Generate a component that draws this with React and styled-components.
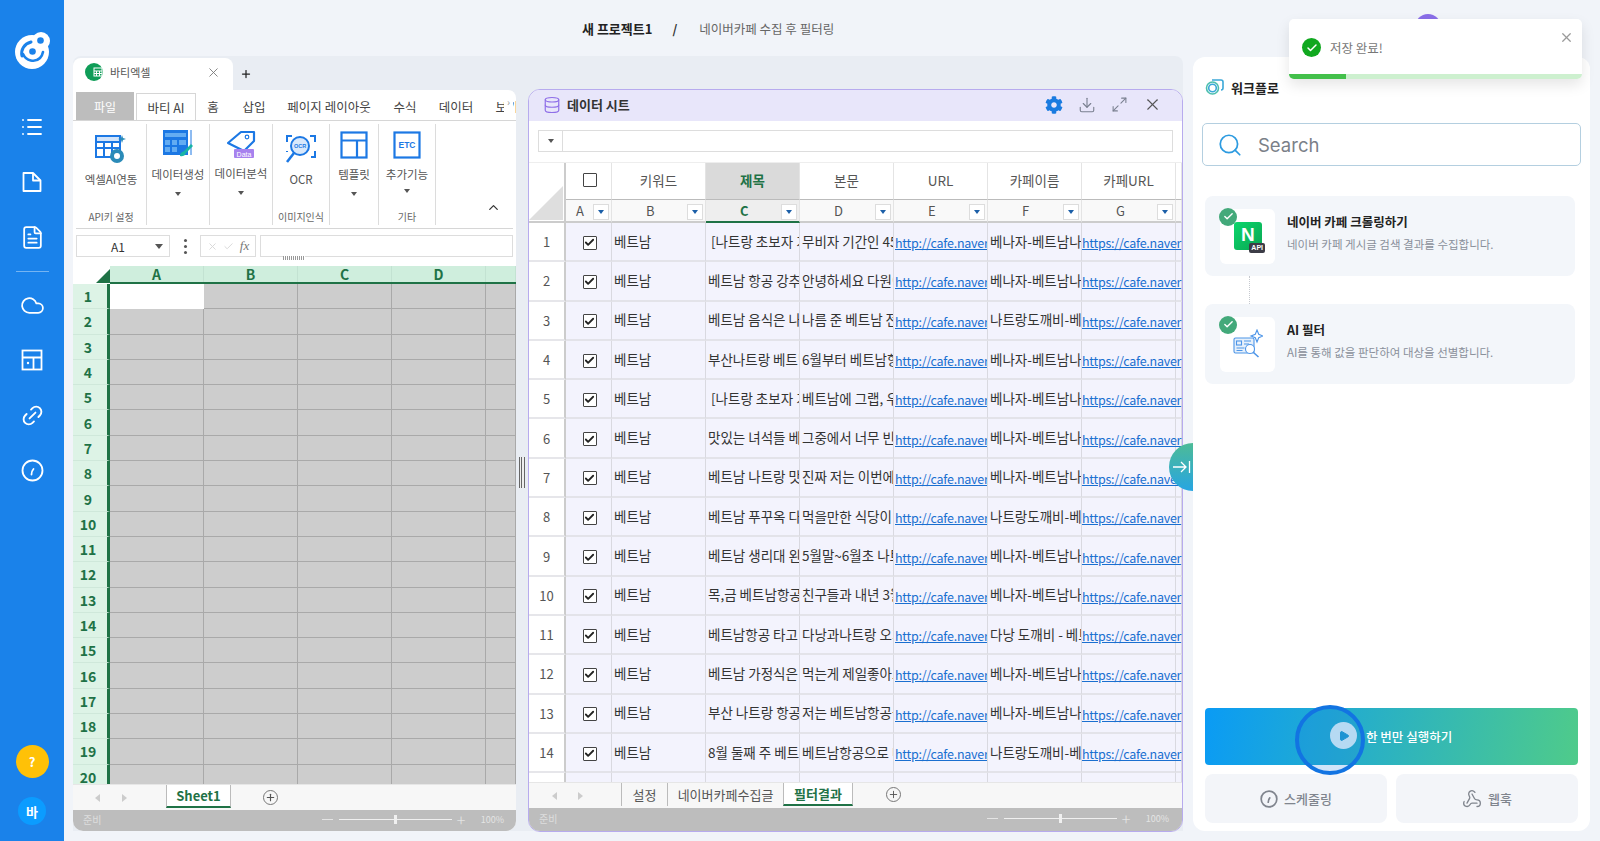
import React from 'react';
import styled, { createGlobalStyle } from 'styled-components';
import { Download, Maximize2, X, Check, Cloud, Link2, Search as SearchIcon, List, FileText, Play, Webhook, ChevronUp, Plus, Database } from 'lucide-react';
import { FaCog } from 'react-icons/fa';

const FONT = `"Noto Sans CJK KR", "Noto Sans", "Liberation Sans", sans-serif`;
const GREEN = '#1f7246';

const GlobalStyle = createGlobalStyle`
  html, body { margin: 0; padding: 0; height: 100%; overflow: hidden; }
  body { font-family: ${FONT}; background: #f1f4f9; color: #333; }
  * { box-sizing: border-box; }
`;

const Page = styled.div`
  position: relative;
  display: flex;
  width: 1600px;
  height: 841px;
  overflow: hidden;
`;

const Sidebar = styled.nav`
  width: 64px;
  flex: none;
  background: #1a82ea;
  display: flex;
  flex-direction: column;
  align-items: center;
  color: #fff;
  padding-top: 32px;
`;
const SideIcons = styled.div`
  display: flex;
  flex-direction: column;
  align-items: center;
  gap: 31px;
  margin-top: 46px;
`;
const SideSlot = styled.div`
  height: 24px;
  display: flex;
  align-items: center;
  justify-content: center;
`;
const SideRule = styled.div`
  width: 33px;
  height: 1px;
  background: rgba(255, 255, 255, 0.4);
  margin: -9px 0 -10px;
`;
const HelpDot = styled.div`
  margin-top: auto;
  width: 33px;
  height: 33px;
  border-radius: 50%;
  background: #ffc107;
  font-size: 13px;
  font-weight: 700;
  display: flex;
  align-items: center;
  justify-content: center;
`;
const UserDot = styled.div`
  width: 28px;
  height: 28px;
  margin: 19px 0 16px;
  border-radius: 50%;
  background: #0b9cff;
  font-size: 13px;
  font-weight: 700;
  display: flex;
  align-items: center;
  justify-content: center;
`;

const Main = styled.div`
  flex: 1;
  display: flex;
  flex-direction: column;
  min-width: 0;
`;
const TopBar = styled.header`
  height: 56px;
  flex: none;
  display: flex;
  align-items: center;
  padding-left: 518px;
  font-size: 12.5px;
`;
const ProjectName = styled.strong`
  font-size: 13px;
  font-weight: 700;
  color: #222;
`;
const Slash = styled.span`
  margin: 0 22px 0 20px;
  font-weight: 700;
  color: #333;
`;
const PageName = styled.span`
  color: #666;
`;
const Body = styled.div`
  flex: 1;
  display: flex;
  padding: 0 10px 10px 9px;
  min-height: 0;
`;
const Workspace = styled.div`
  width: 1110px;
  flex: none;
  background: #e9edf3;
  border-radius: 8px 8px 0 0;
  display: flex;
  height: 775px;
`;
const LeftCol = styled.div`
  width: 443px;
  flex: none;
  display: flex;
  flex-direction: column;
`;
const WindowTabs = styled.div`
  height: 34px;
  flex: none;
  padding-top: 2px;
  display: flex;
  align-items: center;
`;
const WindowTab = styled.div`
  width: 160px;
  height: 32px;
  background: #fff;
  border-radius: 8px 8px 0 0;
  display: flex;
  align-items: center;
  padding: 0 12px 4px;
  font-size: 11px;
  color: #555;
  gap: 7px;
  svg:last-child { margin-left: auto; color: #777; }
`;
const GreenBadge = styled.span`
  width: 18px;
  height: 18px;
  border-radius: 50%;
  background: #0f9d58;
  display: flex;
  align-items: center;
  justify-content: center;
`;
const ExcelPanel = styled.section`
  flex: 1;
  background: #fff;
  border-radius: 0 8px 10px 10px;
  overflow: hidden;
  display: flex;
  flex-direction: column;
`;
const RibbonTabs = styled.div`
  height: 31px;
  flex: none;
  display: flex;
  align-items: flex-end;
  padding: 0 3px;
  border-bottom: 1px solid #d6d6d6;
  font-size: 12.5px;
  color: #444;
  overflow: hidden;
  position: relative;
`;
const FileTab = styled.div`
  width: 58px;
  flex: none;
  height: 28px;
  background: #bdbdbd;
  color: #fff;
  font-size: 12px;
  display: flex;
  align-items: center;
  justify-content: center;
  margin-right: 2px;
`;
const RibbonTab = styled.div`
  height: 27px;
  flex: none;
  width: ${(p) => p.$w}px;
  display: flex;
  align-items: center;
  justify-content: center;
  white-space: nowrap;
  ${(p) => p.$active && `
    background: #fff;
    border: 1px solid #d6d6d6;
    border-bottom: 1px solid #fff;
    margin-bottom: -1px;
    height: 28px;
  `}
`;
const TabScroll = styled.span`
  position: absolute;
  right: 3px;
  top: 1px;
  bottom: 1px;
  width: 9px;
  background: #fff;
  color: #999;
  font-size: 10px;
  line-height: 22px;
  text-align: center;
`;
const Ribbon = styled.div`
  height: 108px;
  flex: none;
  display: flex;
  margin: 0 3px;
  padding: 3px 0;
  border-bottom: 1px solid #d6d6d6;
`;
const RibbonGroup = styled.div`
  width: ${(p) => p.$w}px;
  flex: ${(p) => (p.$grow ? 1 : 'none')};
  border-right: ${(p) => (p.$grow ? 'none' : '1px solid #dcdcdc')};
  display: flex;
  flex-direction: column;
  align-items: center;
  position: relative;
`;
const RibbonBtn = styled.div`
  height: 85px;
  display: flex;
  flex-direction: column;
  align-items: center;
  font-size: 11.5px;
  color: #555;
  white-space: nowrap;
  padding-top: ${(p) => p.$top}px;
`;
const RibbonLabel = styled.div`
  margin-top: ${(p) => p.$gap}px;
`;
const RibbonArrow = styled.div`
  width: 0;
  height: 0;
  margin-top: ${(p) => p.$mt || 10}px;
  border: 3.5px solid transparent;
  border-top: 4px solid #555;
  border-bottom: 0;
`;
const GroupCaption = styled.div`
  font-size: 10px;
  color: #666;
  height: 16px;
  line-height: 16px;
`;
const Collapse = styled.div`
  margin: auto 12px 10px auto;
  color: #333;
  display: flex;
`;
const FormulaRow = styled.div`
  height: 30px;
  flex: none;
  display: flex;
  align-items: center;
  padding: 4px 3px 0;
  position: relative;
`;
const NameBox = styled.div`
  width: 94px;
  height: 22px;
  border: 1px solid #ddd;
  font-size: 12px;
  display: flex;
  align-items: center;
  justify-content: center;
  position: relative;
  padding-right: 10px;
  color: #333;
`;
const DownTri = styled.i`
  width: 0;
  height: 0;
  border: ${(p) => p.$s || 4}px solid transparent;
  border-top: ${(p) => (p.$s || 4) + 1}px solid ${(p) => p.$c || '#555'};
  border-bottom: 0;
  display: block;
`;
const NameArrow = styled(DownTri)`
  position: absolute;
  right: 6px;
  top: 8px;
`;
const Kebab = styled.div`
  width: 30px;
  display: flex;
  flex-direction: column;
  align-items: center;
  gap: 3px;
  i { width: 3px; height: 3px; background: #555; border-radius: 50%; }
`;
const FxBox = styled.div`
  width: 56px;
  height: 22px;
  border: 1px solid #ddd;
  display: flex;
  align-items: center;
  justify-content: space-around;
  padding: 0 3px;
  color: #d6d6d6;
  font: italic 13px "Liberation Serif", serif;
  em { color: #777; font-size: 13px; }
`;
const FormulaInput = styled.div`
  flex: 1;
  height: 22px;
  margin-left: 4px;
  border: 1px solid #ddd;
`;
const GripDots = styled.div`
  position: absolute;
  left: 210px;
  bottom: -1px;
  width: 22px;
  height: 4px;
  background: repeating-linear-gradient(90deg, #999 0 1px, #fff 1px 2px);
`;
const ColHeads = styled.div`
  height: 23px;
  flex: none;
  margin-top: 2px;
  padding-top: 5px;
  display: grid;
  grid-template-columns: 37px repeat(4, 94px) 1fr;
  grid-template-rows: 16px;
  border-bottom: 2px solid ${GREEN};
`;
const Corner = styled.div`
  margin: -5px 0 -2px;
  display: flex;
  justify-content: flex-end;
  align-items: flex-end;
  background: #fff;
  position: relative;
  i {
    width: 14px;
    height: 14px;
    margin: 0 0 1px;
    background: ${GREEN};
    clip-path: polygon(100% 0, 100% 100%, 0 100%);
  }
`;
const ColHead = styled.div`
  font-size: 14px;
  line-height: 16px;
  font-weight: 700;
  color: ${GREEN};
  background: #cfeedd;
  display: flex;
  align-items: center;
  justify-content: center;
  border-right: 1px solid #c3e2d2;
`;
const SheetArea = styled.div`
  flex: 1;
  min-height: 0;
  overflow: hidden;
  display: grid;
  grid-template-columns: 37px repeat(4, 94px) 1fr;
  grid-auto-rows: 25.3px;
`;
const RowHead = styled.div`
  background: #ddf3e6;
  border-right: 3px solid ${GREEN};
  border-bottom: 1px solid #cfe8da;
  font-size: 14px;
  font-weight: 700;
  color: ${GREEN};
  display: flex;
  align-items: center;
  justify-content: center;
  padding-right: 4px;
`;
const Cell = styled.div`
  background: ${(p) => (p.$on ? '#fff' : '#cdcdcd')};
  border-right: 1px solid #a9a9a9;
  border-bottom: 1px solid #a9a9a9;
  ${(p) => p.$on && 'border-color: #fff;'}
`;
const SheetTabs = styled.div`
  height: 26px;
  flex: none;
  background: #f7f7f7;
  display: flex;
  align-items: flex-start;
  font-size: 13px;
  position: relative;
  border-top: 1px solid #e6e6e6;
`;
const NavTri = styled.i`
  width: 0;
  height: 0;
  border: 4px solid transparent;
  ${(p) => (p.$left ? 'border-right: 5px solid #ccc; border-left: 0;' : 'border-left: 5px solid #ccc; border-right: 0;')}
  margin-top: 9px;
  margin-left: ${(p) => p.$ml}px;
`;
const SheetTab = styled.div`
  height: 23px;
  width: ${(p) => p.$w}px;
  margin-left: ${(p) => p.$ml || 0}px;
  display: flex;
  align-items: center;
  justify-content: center;
  white-space: nowrap;
  background: ${(p) => (p.$active ? '#fff' : 'transparent')};
  color: ${(p) => (p.$active ? GREEN : '#555')};
  font-weight: ${(p) => (p.$active ? 700 : 400)};
  border-bottom: ${(p) => (p.$active ? `2px solid ${GREEN}` : 'none')};
  border-left: ${(p) => (p.$sep || p.$active ? '1px solid #bbb' : 'none')};
  border-right: ${(p) => (p.$active ? '1px solid #bbb' : 'none')};
`;
const AddSheet = styled.div`
  width: 15px;
  height: 15px;
  margin: ${(p) => p.$mt || 5}px 0 0 ${(p) => p.$ml}px;
  border: 1.5px solid #777;
  border-radius: 50%;
  color: #555;
  display: flex;
  align-items: center;
  justify-content: center;
`;
const StatusBar = styled.div`
  height: ${(p) => p.$h}px;
  flex: none;
  background: #bdbdbd;
  color: #ddd;
  font-size: 10px;
  display: flex;
  align-items: center;
  padding: 0 ${(p) => p.$pr}px 3px 10px;
`;
const ZoomGroup = styled.div`
  margin-left: auto;
  display: flex;
  align-items: center;
  color: #e4e4e4;
  gap: 5px;
`;
const Minus = styled.i`
  width: 11px;
  height: 1px;
  background: #e4e4e4;
  margin-right: 1px;
`;
const Slider = styled.div`
  width: 113px;
  height: 1px;
  background: #f0f0f0;
  position: relative;
  i {
    position: absolute;
    left: 55px;
    top: -4px;
    width: 3px;
    height: 9px;
    background: #f0f0f0;
  }
`;
const PlusMark = styled.span`
  font-size: 16px;
  line-height: 1;
  width: 12px;
  font-weight: 300;
`;
const ZoomPct = styled.span`
  margin-left: 7px;
  font-size: 9px;
`;
const Splitter = styled.div`
  width: 12px;
  flex: none;
  display: flex;
  align-items: center;
  justify-content: center;
  padding-top: 2px;
  i {
    width: 6px;
    height: 31px;
    margin-top: 56px;
    border-left: 1px solid #666;
    border-right: 1px solid #666;
    background: linear-gradient(90deg, #eee 0 1.5px, #666 1.5px 2.5px, #eee 2.5px);
  }
`;
const DataCol = styled.section`
  flex: 1;
  display: flex;
  flex-direction: column;
  min-width: 0;
  margin-top: 33px;
  height: 743px;
  border: 1px solid #b7abee;
  border-radius: 12px;
  overflow: hidden;
  background: #fff;
`;
const DataHead = styled.div`
  height: 31px;
  flex: none;
  background: #e8e6fa;
  display: flex;
  align-items: center;
  padding: 0 20px 2px 14px;
  font-size: 13px;
  font-weight: 700;
  color: #333;
  gap: 6px;
`;
const DataActions = styled.div`
  margin-left: auto;
  display: flex;
  align-items: center;
  gap: 15px;
  color: #7a8090;
`;
const DataFormula = styled.div`
  height: 41px;
  flex: none;
  padding: 9px 9px 0;
  display: flex;
`;
const DropCell = styled.div`
  width: 24px;
  height: 22px;
  border: 1px solid #ddd;
  border-right: 0;
  display: flex;
  align-items: center;
  justify-content: center;
`;
const WideInput = styled.div`
  flex: 1;
  height: 22px;
  border: 1px solid #ddd;
`;
const COLS = '37px 46px repeat(6, 94px) 1fr';
const HeadGrid = styled.div`
  display: grid;
  grid-template-columns: ${COLS};
  grid-template-rows: 37px 23px;
  flex: none;
  border-top: 1px solid #eee;
`;
const GridCorner = styled.div`
  grid-row: 1 / 3;
  display: flex;
  align-items: flex-end;
  justify-content: flex-end;
  border-right: 2px solid #ccc;
  border-bottom: 2px solid #ccc;
  i {
    width: 34px;
    height: 34px;
    margin: 0 1px 1px 0;
    background: #dedede;
    clip-path: polygon(100% 0, 100% 100%, 0 100%);
  }
`;
const FieldHead = styled.div`
  display: flex;
  align-items: center;
  justify-content: center;
  padding-bottom: 2px;
  font-size: 13.5px;
  color: ${(p) => (p.$sel ? GREEN : '#555')};
  font-weight: ${(p) => (p.$sel ? 700 : 400)};
  background: ${(p) => (p.$sel ? '#dadada' : '#fff')};
  border-right: 1px solid #e4e4e4;
  border-bottom: 1px solid #bbb;
`;
const BoxOutline = styled.span`
  width: 14px;
  height: 14px;
  margin-left: 2px;
  border: 1.5px solid #444;
  border-radius: 1px;
  display: flex;
  align-items: center;
  justify-content: center;
  background: #fff;
`;
const LetterHead = styled.div`
  position: relative;
  display: flex;
  align-items: center;
  font-size: 13px;
  color: ${(p) => (p.$sel ? GREEN : '#555')};
  font-weight: ${(p) => (p.$sel ? 700 : 400)};
  background: ${(p) => (p.$sel ? '#eeeeee' : '#f9f9f9')};
  border-right: 1px solid #e4e4e4;
  border-bottom: ${(p) => (p.$sel ? `2px solid ${GREEN}` : '2px solid #ccc')};
  padding-left: ${(p) => p.$pl}px;
`;
const FilterBtn = styled.span`
  position: absolute;
  right: 2px;
  top: 4px;
  width: 16px;
  height: 16px;
  background: #fff;
  border: 1px solid #ddd;
  display: flex;
  align-items: center;
  justify-content: center;
`;
const RowsArea = styled.div`
  flex: 1;
  min-height: 0;
  overflow: hidden;
  display: grid;
  grid-template-columns: ${COLS};
  grid-auto-rows: 39.3px;
`;
const RowNo = styled.div`
  background: #fff;
  border-right: 2px solid #ccc;
  border-bottom: 2px solid #e6e6ea;
  font-size: 13px;
  color: #555;
  display: flex;
  align-items: center;
  justify-content: center;
`;
const DataCell = styled.div`
  background: #f3f3fd;
  border-right: 1px solid #d9d9e0;
  border-bottom: 2px solid #e3e3e9;
  font-size: 13.5px;
  line-height: 18px;
  color: #333;
  display: flex;
  align-items: center;
  justify-content: ${(p) => (p.$center ? 'center' : 'flex-start')};
  padding: ${(p) => (p.$center ? '2px 0 0' : '0 0 2px 2px')};
  overflow: hidden;
  white-space: pre;
`;
const LinkCell = styled(DataCell)`
  padding: 3px 0 0 ${(p) => (p.$spill ? 0 : 1)}px;
  color: #1a6fd0;
  font-size: 12.5px;
  letter-spacing: -0.25px;
  ${(p) => p.$spill && 'overflow: visible; position: relative; z-index: 1;'}
  a {
    color: inherit;
    text-decoration: underline;
  }
`;
const Right = styled.aside`
  flex: 1;
  background: #fff;
  border-radius: 12px;
  margin: 1px 0 0 10px;
  height: 774px;
  display: flex;
  flex-direction: column;
  padding: 0 9px;
`;
const FlowTitle = styled.div`
  height: 66px;
  flex: none;
  display: flex;
  align-items: center;
  gap: 6px;
  padding: 0 0 6px 3px;
  font-size: 13px;
  font-weight: 700;
  color: #222;
`;
const SearchBox = styled.div`
  height: 43px;
  flex: none;
  border: 1px solid #b4cfe0;
  border-radius: 5px;
  display: flex;
  align-items: center;
  padding-left: 14px;
  gap: 15px;
  font: 400 18.5px Inter, "Noto Sans", sans-serif;
  color: #7a8088;
`;
const FlowList = styled.div`
  margin: 30px 6px 0 3px;
  display: flex;
  flex-direction: column;
  flex: 1;
`;
const FlowCard = styled.div`
  height: 80px;
  flex: none;
  background: #f3f6fa;
  border-radius: 8px;
  display: flex;
  align-items: center;
  padding-left: 15px;
  gap: 12px;
`;
const Dots = styled.div`
  height: 28px;
  flex: none;
  margin-left: 44px;
  border-left: 1px dotted #c6c9cf;
`;
const IconBox = styled.div`
  position: relative;
  width: 55px;
  height: 55px;
  background: #fff;
  border-radius: 6px;
  display: flex;
  align-items: center;
  justify-content: center;
`;
const DoneBadge = styled.span`
  position: absolute;
  left: -1px;
  top: -1px;
  width: 18px;
  height: 18px;
  border-radius: 50%;
  background: #43a97a;
  color: #fff;
  display: flex;
  align-items: center;
  justify-content: center;
`;
const NaverMark = styled.div`
  position: relative;
  width: 28px;
  height: 28px;
  margin: 0 0 1px 1px;
  border-radius: 3px;
  background: linear-gradient(135deg, #0bd66b, #0aa653);
  color: #fff;
  font: 800 19px "Liberation Sans", sans-serif;
  line-height: 25px;
  padding-left: 7px;
`;
const ApiTag = styled.span`
  position: absolute;
  right: -3px;
  bottom: -3px;
  background: #3c3c46;
  color: #fff;
  border-radius: 2px;
  font: 700 7px/10px "Liberation Sans", sans-serif;
  padding: 0 2px;
`;
const CardText = styled.div`
  display: flex;
  flex-direction: column;
  gap: 5px;
  padding-bottom: 8px;
`;
const CardTitle = styled.div`
  font-size: 12.5px;
  font-weight: 700;
  color: #222;
  line-height: 18px;
`;
const CardDesc = styled.div`
  font-size: 11.5px;
  color: #8a909a;
  line-height: 16px;
`;
const RunBtn = styled.div`
  height: 57px;
  flex: none;
  margin: 0 3px;
  border-radius: 4px;
  background: linear-gradient(100deg, #0a9bf5, #4fcb8a);
  color: #fff;
  font-size: 12.5px;
  font-weight: 500;
  display: flex;
  align-items: center;
  padding-left: 125px;
  gap: 9px;
`;
const PlayDot = styled.span`
  width: 27px;
  height: 27px;
  border-radius: 50%;
  background: rgba(255, 255, 255, 0.85);
  color: #1f9bd0;
  display: flex;
  align-items: center;
  justify-content: center;
  margin-top: -2px;
`;
const SubRow = styled.div`
  margin: 9px 3px 8px;
  display: grid;
  grid-template-columns: 1fr 1fr;
  gap: 9px;
  flex: none;
`;
const SubBtn = styled.div`
  height: 49px;
  background: #f3f5f9;
  border-radius: 8px;
  display: flex;
  align-items: center;
  justify-content: center;
  gap: 6px;
  font-size: 13px;
  font-weight: 500;
  color: #80858e;
`;
const Toast = styled.div`
  position: absolute;
  left: 1289px;
  top: 19px;
  width: 293px;
  height: 60px;
  background: #fff;
  border-radius: 5px;
  box-shadow: 0 6px 14px rgba(0, 0, 0, 0.1);
  overflow: hidden;
  display: flex;
  align-items: center;
  padding: 0 0 3px 13px;
  gap: 9px;
  font-size: 12.5px;
  color: #777;
`;
const ToastCheck = styled.span`
  width: 19px;
  height: 19px;
  border-radius: 50%;
  background: #10a81f;
  color: #fff;
  display: flex;
  align-items: center;
  justify-content: center;
`;
const ToastClose = styled.span`
  position: absolute;
  right: 8px;
  top: 11px;
  color: #9a9a9a;
  display: flex;
`;
const ToastTrack = styled.div`
  position: absolute;
  left: 0;
  right: 0;
  bottom: 0;
  height: 5px;
  background: #cdf0cf;
  i {
    display: block;
    width: 57px;
    height: 100%;
    background: #43c04b;
  }
`;
const Avatar = styled.div`
  position: absolute;
  left: 1415px;
  top: 14px;
  width: 26px;
  height: 26px;
  border-radius: 50%;
  background: #8a6ee8;
`;
const Cursor = styled.div`
  position: absolute;
  left: 1295px;
  top: 705px;
  width: 70px;
  height: 70px;
  border: 4px solid #1274e2;
  border-radius: 50%;
  background: rgba(25, 120, 225, 0.2);
`;
const DockTab = styled.div`
  position: absolute;
  z-index: 2;
  left: 1169px;
  top: 443px;
  width: 24px;
  height: 48px;
  border-radius: 24px 0 0 24px;
  background: linear-gradient(#4dbb97, #27a5e2);
  color: #fff;
  display: flex;
  align-items: center;
  padding-left: 3px;
`;

const fileIcon = (
  <svg width="22" height="22" viewBox="0 0 22 22" fill="none" stroke="#fff" strokeWidth="1.8" strokeLinejoin="round">
    <path d="M2.5 2h9.5l7.5 7.5V20h-17z" />
    <path d="M12 2v7.5h7.5" />
  </svg>
);
const layoutIcon = (
  <svg width="22" height="22" viewBox="0 0 22 22" fill="none" stroke="#fff" strokeWidth="1.8">
    <rect x="1.5" y="1.5" width="19" height="19" />
    <path d="M1.5 8.5h19M12.5 8.5v12" />
    <circle cx="7" cy="14" r="1.2" fill="#fff" stroke="none" />
  </svg>
);
const gaugeIcon = (
  <svg width="23" height="23" viewBox="0 0 23 23" fill="none" stroke="#fff" strokeWidth="1.8">
    <circle cx="11.5" cy="11.5" r="10" />
    <path d="M10.5 15.5c0-2 .6-4 2-5.5" strokeLinecap="round" />
  </svg>
);
const grayGauge = (
  <svg width="18" height="18" viewBox="0 0 23 23" fill="none" stroke="#80858e" strokeWidth="2.2">
    <circle cx="11.5" cy="11.5" r="10" />
    <path d="M10.5 15.5c0-2 .6-4 2-5.5" strokeLinecap="round" />
  </svg>
);

const Logo = () => (
  <svg width="35" height="37" viewBox="0 0 35 37" fill="none">
    <circle cx="17" cy="20" r="17" fill="#fff" />
    <circle cx="26" cy="9" r="9" fill="#fff" />
    <circle cx="25.500" cy="8.500" r="3.300" fill="#1a82ea" />
    <circle cx="17.500" cy="19.500" r="3.300" fill="#1a82ea" />
    <path d="M7 24c-1.500-6 2-12 9-14" stroke="#1a82ea" strokeWidth="3" strokeLinecap="round" />
    <path d="M8 22c3 7 12 9 17 4 1.500-1.500 2.500-3.500 3-6" stroke="#1a82ea" strokeWidth="2.600" strokeLinecap="round" />
  </svg>
);

const TableAiIcon = () => (
  <svg width="32" height="32" viewBox="0 0 32 32" fill="none">
    <rect x="1" y="3" width="24" height="21" fill="none" stroke="#1c78e4" strokeWidth="2" />
    <path d="M1 9h24v-6H1zM1 15h24M9 9v15M17 9v15" stroke="#1c78e4" strokeWidth="2" fill="#1c78e4" fillOpacity=".2" />
    <circle cx="22" cy="23" r="7" fill="#2b8bb8" />
    <circle cx="22" cy="23" r="3" fill="#fff" />
    <path d="M27 2l1 3 3 1-3 1-1 3-1-3-3-1 3-1z" fill="#2b8bb8" />
  </svg>
);
const CalcIcon = () => (
  <svg width="32" height="27" viewBox="0 0 32 27" fill="none">
    <rect x="1" y="0" width="25" height="25" fill="#1c78e4" />
    <path d="M3 3h21v4H3zM3 10h5v5H3zM10 10h5v5h-5zM17 10h7v5h-7zM3 17h5v5H3zM10 17h5v5h-5z" fill="#63acf2" />
    <path d="M29 0v25" stroke="#1c78e4" strokeWidth="1" />
    <path d="M18 26c0-4 3-4 4-5l7-7 2 2-7 7c-1 1-1 4-6 3z" fill="#19b5a5" />
  </svg>
);
const TagIcon = () => (
  <svg width="30" height="30" viewBox="0 0 30 30" fill="none">
    <path d="M2 14L15 3h13v9L18 22z" stroke="#1c78e4" strokeWidth="2.2" strokeLinejoin="round" />
    <circle cx="21" cy="8" r="1.8" stroke="#1c78e4" strokeWidth="1.2" />
    <rect x="8" y="20" width="20" height="9" rx="1" fill="#a782ee" />
    <text x="18" y="27.500" textAnchor="middle" fontSize="7" fill="#fff" fontFamily="Liberation Sans">Data</text>
  </svg>
);
const OcrIcon = () => (
  <svg width="32" height="32" viewBox="0 0 32 32" fill="none">
    <path d="M7 3H2v6M25 3h5v6M30 18v6h-4M2 18v1" stroke="#1c78e4" strokeWidth="2" />
    <circle cx="15" cy="13" r="9" stroke="#1c78e4" strokeWidth="2" fill="#d8e8fb" />
    <path d="M9 20l-7 9" stroke="#1c78e4" strokeWidth="2.6" />
    <text x="15" y="15" textAnchor="middle" fontSize="5.500" fontWeight="700" fill="#1c78e4" fontFamily="Liberation Sans">OCR</text>
  </svg>
);
const TemplateIcon = () => (
  <svg width="28" height="28" viewBox="0 0 28 28" fill="none" stroke="#1c78e4" strokeWidth="2.2">
    <rect x="1.5" y="1.5" width="25" height="25" />
    <path d="M1.500 9.500h25M17 9.500v17" />
  </svg>
);
const EtcIcon = () => (
  <svg width="28" height="28" viewBox="0 0 28 28" fill="none">
    <rect x="1.5" y="1.5" width="25" height="25" stroke="#1c78e4" strokeWidth="2.2" />
    <text x="14" y="17" textAnchor="middle" fontSize="8.500" fontWeight="700" fill="#1c78e4" fontFamily="Liberation Sans">ETC</text>
  </svg>
);
const AiFilterIcon = () => (
  <svg width="30" height="30" viewBox="0 0 30 30" fill="none" stroke="#4d95e8" strokeWidth="1.1">
    <rect x="1" y="9" width="20" height="15" rx="1.5" fill="#e6f0fb" />
    <rect x="3.500" y="12" width="5" height="4" />
    <path d="M11 12h7M11 15h5M3.500 19h8M3.500 21.500h6" />
    <circle cx="17" cy="20" r="4.500" fill="#fff" />
    <path d="M20.500 23.500l5 4.500" strokeWidth="1.600" />
    <path d="M24 1l1.700 4.300L30 7l-4.300 1.700L24 13l-1.700-4.300L18 7l4.300-1.700z" />
  </svg>
);
const FlowIcon = () => (
  <svg width="20" height="20" viewBox="0 0 20 20" fill="none" stroke="#4cbfae" strokeWidth="1.600">
    <circle cx="7.500" cy="11" r="6" />
    <circle cx="7.500" cy="11" r="3.800" stroke="#3ba8d8" />
    <path d="M7 3h9a2 2 0 0 1 2 2v6a2 2 0 0 1-2 2" stroke="#3ba8d8" />
  </svg>
);

const RIBBON_TABS = [
  ['홈', 34], ['삽입', 48], ['페이지 레이아웃', 102], ['수식', 50], ['데이터', 52], ['보기', 50],
];
const TITLES = [
  ' [나트랑 초보자 가이드', '베트남 항공 강추 후기', '베트남 음식은 나트랑', '부산나트랑 베트남항공',
  ' [나트랑 초보자 가이드', '맛있는 녀석들 베트남', '베트남 나트랑 맛집', '베트남 푸꾸옥 다낭',
  '베트남 생리대 왼쪽', '목,금 베트남항공 특가', '베트남항공 타고 가요', '베트남 가정식은 ',
  '부산 나트랑 항공권', '8월 둘째 주 베트남',
];
const BODIES = [
  '무비자 기간인 45일 동안', '안녕하세요 다원이네', '나름 준 베트남 전문가', '6월부터 베트남항공',
  '베트남에 그랩, 우버', '그중에서 너무 빈티지', '진짜 저는 이번에 다녀', '먹을만한 식당이 많아',
  '5월말~6월초 나트랑', '친구들과 내년 3월에', '다낭과나트랑 오가는', '먹는게 제일좋아요 진짜',
  '저는 베트남항공을', '베트남항공으로 다녀',
];
const CAFES = [
  '베나자-베트남나트랑', '베나자-베트남나트랑', '나트랑도깨비-베트남', '베나자-베트남나트랑', '베나자-베트남나트랑',
  '베나자-베트남나트랑', '베나자-베트남나트랑', '나트랑도깨비-베트남', '베나자-베트남나트랑', '베나자-베트남나트랑',
  '다낭 도깨비 - 베트남', '베나자-베트남나트랑', '베나자-베트남나트랑', '나트랑도깨비-베트남',
];
const FIELDS = [
  ['키워드', 'B'], ['제목', 'C', true], ['본문', 'D'], ['URL', 'E'], ['카페이름', 'F'], ['카페URL', 'G'],
];

export default function App() {
  return (
    <Page>
      <GlobalStyle />
      <Sidebar>
        <Logo />
        <SideIcons>
          <SideSlot><List size={24} strokeWidth={1.8} /></SideSlot>
          <SideSlot>{fileIcon}</SideSlot>
          <SideSlot><FileText size={25} strokeWidth={1.7} /></SideSlot>
          <SideRule />
          <SideSlot><Cloud size={25} strokeWidth={1.7} /></SideSlot>
          <SideSlot>{layoutIcon}</SideSlot>
          <SideSlot><Link2 size={25} strokeWidth={1.8} style={{ transform: 'rotate(-45deg)' }} /></SideSlot>
          <SideSlot>{gaugeIcon}</SideSlot>
        </SideIcons>
        <HelpDot>?</HelpDot>
        <UserDot>바</UserDot>
      </Sidebar>
      <Main>
        <TopBar>
          <ProjectName>새 프로젝트1</ProjectName>
          <Slash>/</Slash>
          <PageName>네이버카페 수집 후 필터링</PageName>
        </TopBar>
        <Body>
          <Workspace>
            <LeftCol>
              <WindowTabs>
                <WindowTab>
                  <GreenBadge>
                    <svg width="10" height="10" viewBox="0 0 10 10" fill="none" stroke="#fff" strokeWidth="1">
                      <rect x="1" y="1" width="8" height="8" />
                      <path d="M1 4h8M1 6.500h8M3.500 4v5M6.500 4v5" />
                    </svg>
                  </GreenBadge>
                  바티엑셀
                  <X size={15} strokeWidth={1.4} />
                </WindowTab>
                <Plus size={12} strokeWidth={2.5} color="#222" style={{ marginLeft: 7 }} />
              </WindowTabs>
              <ExcelPanel>
                <RibbonTabs>
                  <FileTab>파일</FileTab>
                  <RibbonTab $active $w={60}>바티 AI</RibbonTab>
                  {RIBBON_TABS.map(([t, w]) => (
                    <RibbonTab key={t} $w={w}>{t}</RibbonTab>
                  ))}
                  <TabScroll>›</TabScroll>
                </RibbonTabs>
                <Ribbon>
                  <RibbonGroup $w={71}>
                    <RibbonBtn $top={9}><TableAiIcon /><RibbonLabel $gap={6}>엑셀AI연동</RibbonLabel></RibbonBtn>
                    <GroupCaption>API키 설정</GroupCaption>
                  </RibbonGroup>
                  <RibbonGroup $w={63}>
                    <RibbonBtn $top={6}><CalcIcon /><RibbonLabel $gap={9}>데이터생성</RibbonLabel><RibbonArrow /></RibbonBtn>
                  </RibbonGroup>
                  <RibbonGroup $w={63}>
                    <RibbonBtn $top={5}><TagIcon /><RibbonLabel $gap={6}>데이터분석</RibbonLabel><RibbonArrow /></RibbonBtn>
                  </RibbonGroup>
                  <RibbonGroup $w={57}>
                    <RibbonBtn $top={9}><OcrIcon /><RibbonLabel $gap={6}>OCR</RibbonLabel></RibbonBtn>
                    <GroupCaption>이미지인식</GroupCaption>
                  </RibbonGroup>
                  <RibbonGroup $w={49}>
                    <RibbonBtn $top={7}><TemplateIcon /><RibbonLabel $gap={7}>템플릿</RibbonLabel><RibbonArrow /></RibbonBtn>
                  </RibbonGroup>
                  <RibbonGroup $w={57}>
                    <RibbonBtn $top={7}><EtcIcon /><RibbonLabel $gap={7}>추가기능</RibbonLabel><RibbonArrow $mt={7} /></RibbonBtn>
                    <GroupCaption>기타</GroupCaption>
                  </RibbonGroup>
                  <RibbonGroup $grow>
                    <Collapse><ChevronUp size={15} /></Collapse>
                  </RibbonGroup>
                </Ribbon>
                <FormulaRow>
                  <NameBox>A1<NameArrow /></NameBox>
                  <Kebab><i /><i /><i /></Kebab>
                  <FxBox>
                    <X size={11} />
                    <Check size={11} />
                    <em>fx</em>
                  </FxBox>
                  <FormulaInput />
                  <GripDots />
                </FormulaRow>
                <ColHeads>
                  <Corner><i /></Corner>
                  {['A', 'B', 'C', 'D', ''].map((c) => <ColHead key={c}>{c}</ColHead>)}
                </ColHeads>
                <SheetArea>
                  {Array.from({ length: 20 }, (_, r) => (
                    <React.Fragment key={r}>
                      <RowHead>{r + 1}</RowHead>
                      {[0, 1, 2, 3, 4].map((c) => <Cell key={c} $on={r === 0 && c === 0} />)}
                    </React.Fragment>
                  ))}
                </SheetArea>
                <SheetTabs>
                  <NavTri $left $ml={22} />
                  <NavTri $ml={22} />
                  <SheetTab $active $w={65} $ml={39}>Sheet1</SheetTab>
                  <AddSheet $ml={32}><Plus size={11} strokeWidth={2.5} /></AddSheet>
                </SheetTabs>
                <StatusBar $h={21} $pr={12}>
                  준비
                  <ZoomGroup>
                    <Minus /><Slider><i /></Slider><PlusMark>+</PlusMark><ZoomPct>100%</ZoomPct>
                  </ZoomGroup>
                </StatusBar>
              </ExcelPanel>
            </LeftCol>
            <Splitter><i /></Splitter>
            <DataCol>
              <DataHead>
                <Database size={18} color="#8f6fe8" strokeWidth={1.6} />
                데이터 시트
                <DataActions>
                  <FaCog size={18} color="#1a7be0" />
                  <Download size={18} strokeWidth={1.5} />
                  <Maximize2 size={17} strokeWidth={1.5} />
                  <X size={19} strokeWidth={1.4} color="#555" />
                </DataActions>
              </DataHead>
              <DataFormula>
                <DropCell><DownTri $s={3} /></DropCell>
                <WideInput />
              </DataFormula>
              <HeadGrid>
                <GridCorner><i /></GridCorner>
                <FieldHead><BoxOutline /></FieldHead>
                {FIELDS.map(([f, , sel]) => <FieldHead key={f} $sel={sel}>{f}</FieldHead>)}
                <FieldHead />
                <LetterHead $pl={10}>A<FilterBtn><DownTri $s={3} $c="#1c5fa8" /></FilterBtn></LetterHead>
                {FIELDS.map(([f, l, sel]) => (
                  <LetterHead key={l} $pl={34} $sel={sel}>{l}<FilterBtn><DownTri $s={3} $c="#1c5fa8" /></FilterBtn></LetterHead>
                ))}
                <LetterHead />
              </HeadGrid>
              <RowsArea>
                {TITLES.map((title, i) => (
                  <React.Fragment key={i}>
                    <RowNo>{i + 1}</RowNo>
                    <DataCell $center>
                      <BoxOutline><Check size={11} strokeWidth={4} color="#222" /></BoxOutline>
                    </DataCell>
                    <DataCell>베트남</DataCell>
                    <DataCell>{title}</DataCell>
                    <DataCell>{BODIES[i]}</DataCell>
                    <LinkCell><a>http://cafe.naver.com/vietnam</a></LinkCell>
                    <DataCell>{CAFES[i]}</DataCell>
                    <LinkCell $spill><a>https://cafe.naver</a></LinkCell>
                    <DataCell />
                  </React.Fragment>
                ))}
                <RowNo />
                {[0, 1, 2, 3, 4, 5, 6, 7].map((c) => <DataCell key={c} />)}
              </RowsArea>
              <SheetTabs>
                <NavTri $left $ml={23} />
                <NavTri $ml={21} />
                <SheetTab $w={46} $ml={38} $sep>설정</SheetTab>
                <SheetTab $w={116} $sep>네이버카페수집글</SheetTab>
                <SheetTab $active $w={70}>필터결과</SheetTab>
                <AddSheet $ml={33} $mt={4}><Plus size={11} strokeWidth={2} /></AddSheet>
              </SheetTabs>
              <StatusBar $h={23} $pr={13}>
                준비
                <ZoomGroup>
                  <Minus /><Slider><i /></Slider><PlusMark>+</PlusMark><ZoomPct>100%</ZoomPct>
                </ZoomGroup>
              </StatusBar>
            </DataCol>
          </Workspace>
          <Right>
            <FlowTitle><FlowIcon />워크플로</FlowTitle>
            <SearchBox>
              <SearchIcon size={26} strokeWidth={1.6} color="#2d9be0" />
              Search
            </SearchBox>
            <FlowList>
              <FlowCard>
                <IconBox>
                  <DoneBadge><Check size={11} strokeWidth={3} /></DoneBadge>
                  <NaverMark>N<ApiTag>API</ApiTag></NaverMark>
                </IconBox>
                <CardText>
                  <CardTitle>네이버 카페 크롤링하기</CardTitle>
                  <CardDesc>네이버 카페 게시글 검색 결과를 수집합니다.</CardDesc>
                </CardText>
              </FlowCard>
              <Dots />
              <FlowCard>
                <IconBox>
                  <DoneBadge><Check size={11} strokeWidth={3} /></DoneBadge>
                  <AiFilterIcon />
                </IconBox>
                <CardText>
                  <CardTitle>AI 필터</CardTitle>
                  <CardDesc>AI를 통해 값을 판단하여 대상을 선별합니다.</CardDesc>
                </CardText>
              </FlowCard>
            </FlowList>
            <RunBtn>
              <PlayDot><Play size={12} fill="currentColor" /></PlayDot>
              한 번만 실행하기
            </RunBtn>
            <SubRow>
              <SubBtn>{grayGauge}스케줄링</SubBtn>
              <SubBtn><Webhook size={20} strokeWidth={1.6} />웹훅</SubBtn>
            </SubRow>
          </Right>
        </Body>
      </Main>
      <Avatar />
      <Toast>
        <ToastCheck><Check size={12} strokeWidth={3} /></ToastCheck>
        저장 완료!
        <ToastClose><X size={15} strokeWidth={2} /></ToastClose>
        <ToastTrack><i /></ToastTrack>
      </Toast>
      <DockTab>
        <svg width="20" height="14" viewBox="0 0 20 14" fill="none" stroke="#fff" strokeWidth="1.300">
          <path d="M1 7h13M9 2l5 5-5 5M17.500 1v12" />
        </svg>
      </DockTab>
      <Cursor />
    </Page>
  );
}
